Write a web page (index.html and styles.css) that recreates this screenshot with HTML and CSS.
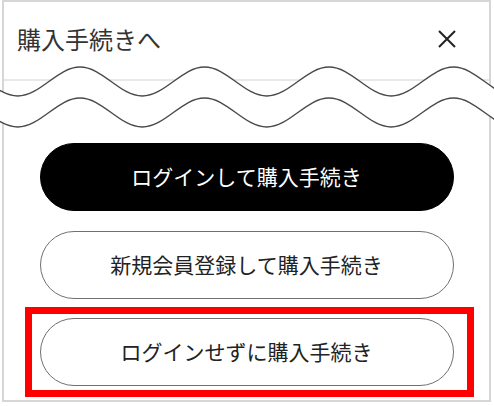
FILE: index.html
```html
<!DOCTYPE html>
<html lang="ja">
<head>
<meta charset="utf-8">
<title>購入手続きへ</title>
<link rel="stylesheet" href="styles.css">
</head>
<body>
<div class="sheet">
  <header class="head">
    <h1 class="title">購入手続きへ</h1>
    <button class="close" type="button" aria-label="閉じる">
      <svg width="18" height="18" viewBox="0 0 18 18" aria-hidden="true">
        <path d="M1 1 L17 17 M17 1 L1 17" stroke="#222" stroke-width="2" fill="none"/>
      </svg>
    </button>
  </header>

  <!-- torn edge between the header and the action list -->
  <svg class="tear" width="494" height="140" viewBox="0 0 494 140" aria-hidden="true">
    <path class="tear-fill" d="M -44.5 67 C -21.9 67 -4.85 96 17.75 96 S 57.4 67 80 67 S 119.65 96 142.25 96 S 181.9 67 204.5 67 S 244.15 96 266.75 96 S 306.4 67 329 67 S 368.65 96 391.25 96 S 430.9 67 453.5 67 S 493.15 96 515.75 96 L 515.75 127 C 493.15 127 476.1 98 453.5 98 S 413.85 127 391.25 127 S 351.6 98 329 98 S 289.35 127 266.75 127 S 227.1 98 204.5 98 S 164.85 127 142.25 127 S 102.6 98 80 98 S 40.35 127 17.75 127 S -21.9 98 -44.5 98 Z"/>
    <path class="tear-line" d="M -44.5 67 C -21.9 67 -4.85 96 17.75 96 S 57.4 67 80 67 S 119.65 96 142.25 96 S 181.9 67 204.5 67 S 244.15 96 266.75 96 S 306.4 67 329 67 S 368.65 96 391.25 96 S 430.9 67 453.5 67 S 493.15 96 515.75 96"/>
    <path class="tear-line" transform="translate(0 31)" d="M -44.5 67 C -21.9 67 -4.85 96 17.75 96 S 57.4 67 80 67 S 119.65 96 142.25 96 S 181.9 67 204.5 67 S 244.15 96 266.75 96 S 306.4 67 329 67 S 368.65 96 391.25 96 S 430.9 67 453.5 67 S 493.15 96 515.75 96"/>
  </svg>

  <div class="actions">
    <button class="btn btn-primary" type="button">ログインして購入手続き</button>
    <button class="btn" type="button">新規会員登録して購入手続き</button>
    <div class="pick">
      <button class="btn" type="button">ログインせずに購入手続き</button>
    </div>
  </div>
</div>
</body>
</html>
```

FILE: styles.css
```css
* {
  box-sizing: border-box;
}

html, body {
  margin: 0;
  padding: 0;
  background: #fff;
}

body {
  font-family: "Noto Sans CJK JP", "Noto Sans", sans-serif;
  color: #222;
}

.sheet {
  position: relative;
  margin-left: 2px;
  width: 489px;
  height: 402px;
  border: 2px solid #d6d6d6;
  background: #fff;
}

.head {
  display: flex;
  align-items: center;
  justify-content: space-between;
  height: 79px;
  padding: 0 33px 4px 13px;
  border-bottom: 2px solid #e8e8e8;
}

.title {
  margin: 0;
  font-size: 24px;
  line-height: 24px;
  font-weight: 400;
  color: #333;
}

.close {
  display: flex;
  padding: 0;
  margin: 0;
  border: 0;
  background: none;
}

.tear {
  position: absolute;
  left: -4px;
  top: -2px;
  pointer-events: none;
}

.tear-fill {
  fill: #fff;
}

.tear-line {
  fill: none;
  stroke: #4a4a4a;
  stroke-width: 1.4;
}

.actions {
  display: flex;
  flex-direction: column;
  align-items: center;
  gap: 19.5px;
  padding-top: 62px;
}

.btn {
  display: flex;
  align-items: center;
  justify-content: center;
  width: 414px;
  height: 68px;
  margin: 0;
  padding: 0 0 2px;
  border: 1.5px solid #707070;
  border-radius: 34px;
  background: #fff;
  color: #222;
  font-family: inherit;
  font-size: 21px;
  font-weight: 400;
}

.btn-primary {
  background: #000;
  border-color: #000;
  color: #fff;
}

.pick {
  position: relative;
}

/* red frame drawn around the guest checkout option */
.pick::after {
  content: "";
  position: absolute;
  top: -11px;
  right: -20px;
  bottom: -11px;
  left: -15px;
  border: 7px solid #f00;
  pointer-events: none;
}
```
